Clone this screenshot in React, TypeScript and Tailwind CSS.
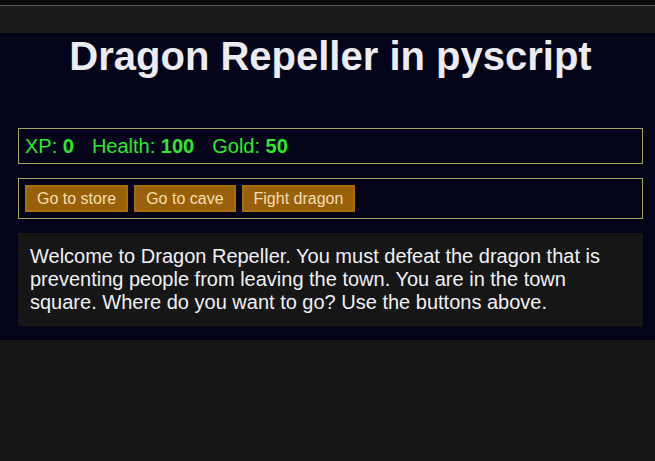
import React from "react";

const App: React.FC = () => {
  return (
    <div className="min-h-[461px] bg-[#151515] font-['Liberation_Sans',Arial,sans-serif]">
      <div className="h-[5px] bg-[#0a0a0a]" />
      <div className="h-px bg-[#555555]" />
      <div className="h-[27px] bg-[#1b1b1b]" />
      <div className="bg-[#03031a] pl-[18px] pr-[12px] pb-[14px]">
        <h1 className="pt-[3px] mb-[52px] text-center text-[40px] leading-[40px] font-bold text-[#ececf0]">
          Dragon Repeller in pyscript
        </h1>
        <div className="flex gap-[18px] border border-[#a3a35a] px-[6px] h-[36px] items-center text-[20px] text-[#2ee82e]">
          <span>
            XP: <strong>0</strong>
          </span>
          <span>
            Health: <strong>100</strong>
          </span>
          <span>
            Gold: <strong>50</strong>
          </span>
        </div>
        <div className="mt-[14px] flex gap-[6px] border border-[#a3a35a] p-[6px]">
          <button className="h-[27px] px-[10px] bg-[#99600a] border-2 border-[#a86c08] text-[16px] text-[#f5deb3]">
            Go to store
          </button>
          <button className="h-[27px] px-[10px] bg-[#99600a] border-2 border-[#a86c08] text-[16px] text-[#f5deb3]">
            Go to cave
          </button>
          <button className="h-[27px] px-[10px] bg-[#99600a] border-2 border-[#a86c08] text-[16px] text-[#f5deb3]">
            Fight dragon
          </button>
        </div>
        <div className="mt-[14px] bg-[#161616] px-[12px] py-[12px] text-[20px] leading-[23px] text-[#f0f0f5]">
          Welcome to Dragon Repeller. You must defeat the dragon that is preventing people from leaving the town. You are in the town square. Where do you want to go? Use the buttons above.
        </div>
      </div>
    </div>
  );
};

export default App;
